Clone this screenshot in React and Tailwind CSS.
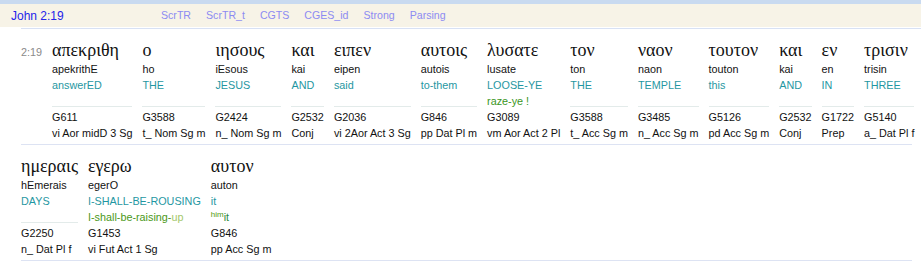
const links = ['ScrTR', 'ScrTR_t', 'CGTS', 'CGES_id', 'Strong', 'Parsing'];

const lines = [
	{
		verse: '2:19',
		words: [
			{ gr: 'απεκριθη', tr: 'apekrithE', en: 'answerED', st: 'G611', pa: 'vi Aor midD 3 Sg' },
			{ gr: 'ο', tr: 'ho', en: 'THE', st: 'G3588', pa: 't_ Nom Sg m' },
			{ gr: 'ιησους', tr: 'iEsous', en: 'JESUS', st: 'G2424', pa: 'n_ Nom Sg m' },
			{ gr: 'και', tr: 'kai', en: 'AND', st: 'G2532', pa: 'Conj' },
			{ gr: 'ειπεν', tr: 'eipen', en: 'said', st: 'G2036', pa: 'vi 2Aor Act 3 Sg' },
			{ gr: 'αυτοις', tr: 'autois', en: 'to-them', st: 'G846', pa: 'pp Dat Pl m' },
			{
				gr: 'λυσατε',
				tr: 'lusate',
				en: 'LOOSE-YE',
				extra: <span className="text-[#3a961c]">raze-ye !</span>,
				st: 'G3089',
				pa: 'vm Aor Act 2 Pl',
			},
			{ gr: 'τον', tr: 'ton', en: 'THE', st: 'G3588', pa: 't_ Acc Sg m' },
			{ gr: 'ναον', tr: 'naon', en: 'TEMPLE', st: 'G3485', pa: 'n_ Acc Sg m' },
			{ gr: 'τουτον', tr: 'touton', en: 'this', st: 'G5126', pa: 'pd Acc Sg m' },
			{ gr: 'και', tr: 'kai', en: 'AND', st: 'G2532', pa: 'Conj' },
			{ gr: 'εν', tr: 'en', en: 'IN', st: 'G1722', pa: 'Prep' },
			{ gr: 'τρισιν', tr: 'trisin', en: 'THREE', st: 'G5140', pa: 'a_ Dat Pl f' },
		],
	},
	{
		words: [
			{ gr: 'ημεραις', tr: 'hEmerais', en: 'DAYS', st: 'G2250', pa: 'n_ Dat Pl f' },
			{
				gr: 'εγερω',
				tr: 'egerO',
				en: 'I-SHALL-BE-ROUSING',
				extra: (
					<>
						<span className="text-[#4a9818]">I-shall-be-raising-</span>
						<span className="text-[#a3c76a]">up</span>
					</>
				),
				st: 'G1453',
				pa: 'vi Fut Act 1 Sg',
			},
			{
				gr: 'αυτον',
				tr: 'auton',
				en: 'it',
				extra: (
					<>
						<span className="relative -top-[4px] text-[8px] text-[#4f9a0f]">him</span>
						<span className="text-[#2e8b3c]">it</span>
					</>
				),
				st: 'G846',
				pa: 'pp Acc Sg m',
			},
		],
	},
];

function Word( { w } ) {
	return (
		<div className="flex flex-col">
			<div className="h-[22px] whitespace-nowrap font-['Liberation_Serif',serif] text-[18px] leading-[22px] text-[#111]">
				{ w.gr }
			</div>
			<div className="whitespace-nowrap leading-[16px] text-[#111]">{ w.tr }</div>
			<div className="whitespace-nowrap leading-[16px] text-[#1f97a2]">{ w.en }</div>
			{ w.extra ? (
				<div className="h-[16px] whitespace-nowrap leading-[16px]">{ w.extra }</div>
			) : (
				<>
					<div className="h-[13px]" />
					<div className="h-px bg-[#e3ebea]" />
					<div className="h-[2px]" />
				</>
			) }
			<div className="whitespace-nowrap leading-[16px] text-[#111]">{ w.st }</div>
			<div className="whitespace-nowrap leading-[16px] text-[#111]">{ w.pa }</div>
		</div>
	);
}

export default function App() {
	return (
		<div className="h-[269px] w-[921px] overflow-hidden bg-white font-['Liberation_Sans',Arial,sans-serif] text-[10.8px]">
			<div className="h-[4px] bg-[#c9daf0]" />
			<div className="flex h-[23px] items-center bg-[#f7f3e7]">
				<span className="ml-[11px] w-[150px] text-[12px] text-[#2424ea]">John 2:19</span>
				<div className="flex gap-x-[15px] text-[10.6px] text-[#8d8bf2]">
					{ links.map( ( l ) => (
						<span key={ l }>{ l }</span>
					) ) }
				</div>
			</div>
			<div className="ml-[21px] mt-[1px] h-px bg-[#d8e1f4]" />
			<div className="ml-[21px] mr-[9px]">
				{ lines.map( ( line, i ) => (
					<div
						key={ i }
						className="flex items-baseline gap-x-[10px] border-b border-[#dde3f3] pb-[3px] pt-[10px]"
					>
						{ line.verse && <span className="text-[#8a8a8a]">{ line.verse }</span> }
						{ line.words.map( ( w, j ) => (
							<Word key={ j } w={ w } />
						) ) }
					</div>
				) ) }
			</div>
		</div>
	);
}
